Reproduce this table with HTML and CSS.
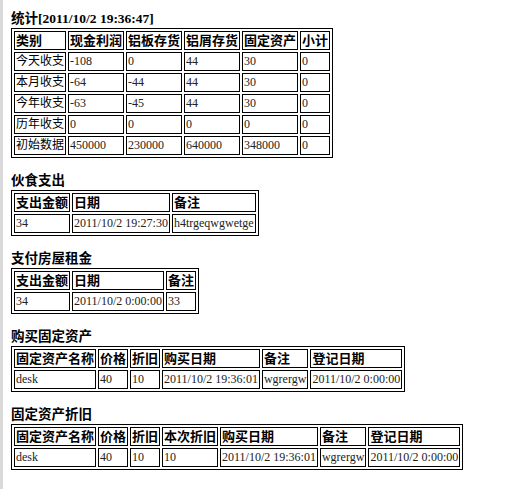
FILE: index.html
```html
<!DOCTYPE html>
<html>
<head>
<meta charset="utf-8">
<link rel="stylesheet" href="styles.css">
</head>
<body>
<section class="block">
  <h2 class="title">统计[2011/10/2 19:36:47]</h2>
  <table class="grid">
    <tr><th>类别</th><th>现金利润</th><th>铝板存货</th><th>铝屑存货</th><th>固定资产</th><th>小计</th></tr>
    <tr><td class="cn">今天收支</td><td>-108</td><td>0</td><td>44</td><td>30</td><td>0</td></tr>
    <tr><td class="cn">本月收支</td><td>-64</td><td>-44</td><td>44</td><td>30</td><td>0</td></tr>
    <tr><td class="cn">今年收支</td><td>-63</td><td>-45</td><td>44</td><td>30</td><td>0</td></tr>
    <tr><td class="cn">历年收支</td><td>0</td><td>0</td><td>0</td><td>0</td><td>0</td></tr>
    <tr><td class="cn">初始数据</td><td>450000</td><td>230000</td><td>640000</td><td>348000</td><td>0</td></tr>
  </table>
</section>
<section class="block">
  <h2 class="title">伙食支出</h2>
  <table class="grid">
    <tr><th>支出金额</th><th>日期</th><th>备注</th></tr>
    <tr><td>34</td><td>2011/10/2 19:27:30</td><td>h4trgeqwgwetge</td></tr>
  </table>
</section>
<section class="block">
  <h2 class="title">支付房屋租金</h2>
  <table class="grid">
    <tr><th>支出金额</th><th>日期</th><th>备注</th></tr>
    <tr><td>34</td><td>2011/10/2 0:00:00</td><td>33</td></tr>
  </table>
</section>
<section class="block">
  <h2 class="title">购买固定资产</h2>
  <table class="grid">
    <tr><th>固定资产名称</th><th>价格</th><th>折旧</th><th>购买日期</th><th>备注</th><th>登记日期</th></tr>
    <tr><td>desk</td><td>40</td><td>10</td><td>2011/10/2 19:36:01</td><td>wgrergw</td><td>2011/10/2 0:00:00</td></tr>
  </table>
</section>
<section class="block">
  <h2 class="title">固定资产折旧</h2>
  <table class="grid">
    <tr><th>固定资产名称</th><th>价格</th><th>折旧</th><th>本次折旧</th><th>购买日期</th><th>备注</th><th>登记日期</th></tr>
    <tr><td>desk</td><td>40</td><td>10</td><td>10</td><td>2011/10/2 19:36:01</td><td>wgrergw</td><td>2011/10/2 0:00:00</td></tr>
  </table>
</section>
</body>
</html>
```
FILE: styles.css
```css
html {
  border-left: 3px solid #d9d9d9;
  min-height: 100%;
  box-sizing: border-box;
}
body {
  margin: 10px 0 0 8px;
  font-family: "Liberation Serif", "Noto Sans CJK SC", serif;
  font-size: 12px;
  color: #000;
}
.block + .block {
  margin-top: 14px;
}
.title {
  margin: 0;
  font-size: 13.5px;
  font-weight: bold;
  line-height: 18px;
}
.grid {
  border: 1px solid #000;
  border-spacing: 2px;
}
.grid th,
.grid td {
  border: 1px solid #000;
  padding: 1px;
  line-height: 15px;
  text-align: left;
  white-space: nowrap;
}
.grid th {
  font-size: 13px;
  font-weight: bold;
}
.grid td {
  font-size: 12px;
  color: #222;
}
.grid td.cn {
  color: #000;
}
```
